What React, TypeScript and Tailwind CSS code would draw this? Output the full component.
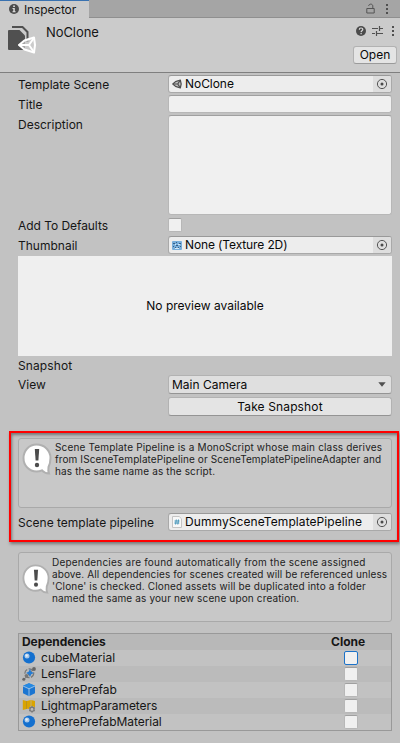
import React from 'react';

const Target = () => (
  <span className="flex h-full w-[18px] shrink-0 items-center justify-center bg-[#dedede]">
    <svg width="12" height="12" viewBox="0 0 12 12" fill="none">
      <circle cx="6" cy="6" r="4.6" stroke="#555" strokeWidth="1" />
      <circle cx="6" cy="6" r="1.5" fill="#4a4a4a" />
    </svg>
  </span>
);

const SceneGlyph = () => (
  <svg width="10" height="10" viewBox="0 0 10 10" fill="none" stroke="#4e4e4e" strokeWidth="1.200" strokeLinejoin="round">
    <path d="M.8 5 3.500 2.600 8.300 1 9.200 5 8.300 9 3.500 7.400Z" fill="#bdbdbd" />
    <path d="M1 5H5.800L8 1.400M5.800 5 8 8.600" />
  </svg>
);

const TextureGlyph = () => (
  <svg width="10" height="9" viewBox="0 0 10 9">
    <rect width="10" height="9" rx="1" fill="#78aedb" />
    <path d="M1 2h2v1H1zM4 1h1v1H4zM7 2h2v1H7zM1 5h1v1H1zM4 4h2v1H4zM8 5h1v1H8zM3 6h1v1H3zM6 6h1v1H6z" fill="#365f86" />
    <path d="M3 3h1v1H3zM6 3h2v1H6zM3 7h4v1H3z" fill="#d5e8f7" />
  </svg>
);

const ScriptGlyph = () => (
  <svg width="10" height="12" viewBox="0 0 10 12">
    <path d="M.5.5h6.700L9.500 2.800v8.700h-9z" fill="#f8f8f8" stroke="#c4c4c4" />
    <path d="M4.300 3.500 3.600 8.500M6.500 3.500 5.800 8.500M2.500 5h5M2.300 7h5" stroke="#3a8fb5" strokeWidth=".9" />
  </svg>
);

const ObjectField = ({ icon, children }: { icon: React.ReactNode; children: React.ReactNode }) => (
  <div className="flex h-[18px] w-[224px] shrink-0 items-center overflow-hidden rounded-[3px] border border-[#a9a9a9] border-t-[#999] bg-[#ededed]">
    <span className="flex w-[16px] shrink-0 items-center pl-[3px]">{icon}</span>
    <span className="flex-1 whitespace-nowrap text-[#090909]">{children}</span>
    <Target />
  </div>
);

const Row = ({ label, className, children }: { label: React.ReactNode; className: string; children?: React.ReactNode }) => (
  <div className={`flex pl-[18px] ${className}`}>
    <div className="h-[18px] w-[150px] shrink-0 whitespace-nowrap leading-[20px]">{label}</div>
    {children}
  </div>
);

const Bubble = ({ width, height }: { width: number; height: number }) => (
  <svg width={width} height={height} viewBox="0 0 30 32" preserveAspectRatio="none" className="shrink-0">
    <path d="M14.500 1.500C7 1.500 1.500 7.500 1.500 15S7 28.500 14.500 28.500c2 0 3.800-.4 5.500-1.200 1.600 1.800 4 3 7 3.200-.8-2-.9-4-.5-6.500C28 21 28.500 18 28.500 15 28.500 7.500 22.500 1.500 14.500 1.500Z" fill="#fff" stroke="#b0b0b0" strokeWidth="2" />
    <path d="M12.800 6h4.400l-.8 11.500h-2.800z" fill="#4c4c4c" />
    <circle cx="15" cy="22" r="2.200" fill="#4c4c4c" />
  </svg>
);

const Dots = () => (
  <svg width="4" height="12" viewBox="0 0 4 12" fill="#4f4f4f">
    <path d="M1 1h2v2H1zM1 5h2v2H1zM1 9h2v2H1z" />
  </svg>
);

const Material = () => (
  <svg width="14" height="14" viewBox="0 0 14 14">
    <circle cx="7" cy="6.500" r="6.100" fill="#1470cf" />
    <circle cx="5" cy="5" r="2.500" fill="#a9c8e8" />
    <circle cx="4.600" cy="4.500" r="1.200" fill="#e4eef8" />
  </svg>
);

const Flare = () => (
  <svg width="14" height="14" viewBox="0 0 14 14">
    <circle cx="7.300" cy="6.300" r="4.400" fill="none" stroke="#777" strokeWidth="1.200" strokeDasharray="5 1.500" />
    <path d="M2 12.500 12 1.500" stroke="#777" strokeWidth="1" />
    <path d="m8 2 1.200 2.800L12 6 9.200 7.200 8 10 6.500 7.200 4 6l2.600-1.200z" fill="#247bd2" />
    <circle cx="12" cy="2" r="1.900" fill="#666" />
    <circle cx="1.800" cy="12.200" r="1.500" fill="#666" />
    <circle cx="4.500" cy="8.800" r="1.900" fill="#777" />
  </svg>
);

const Cube = () => (
  <svg width="14" height="14" viewBox="0 0 14 14">
    <path d="M7 .2 13 2.700v7.600L7 13.300 1 10.300V2.700z" fill="#1b75d1" />
    <path d="M7 .2 13 2.700 7 5.400 1 2.700z" fill="#2589e2" />
    <path d="M1 3 7 5.800 13 3M7 5.800v7.500" fill="none" stroke="#a9c8e5" strokeWidth=".9" />
  </svg>
);

const Lightmap = () => (
  <svg width="14" height="14" viewBox="0 0 14 14">
    <path d="M.8 1 4.500 2v8L.8 11zM5 2l3.700-1v9L5 9.800zM9.300 1 13 2v6H9.300z" fill="#d9a400" />
    <path d="M4.200 2h.8v8h-.8z" fill="#b98b05" />
    <circle cx="10" cy="10.300" r="3.100" fill="#bbb" />
    <circle cx="10" cy="10.300" r="2.100" fill="none" stroke="#777" strokeWidth="1.200" />
    <path d="M10 6.900v1.300M10 12.400v1.400M7 8.600l1.200.7M11.800 11.300l1.200.7M7 12l1.200-.7M11.800 9.300l1.200-.7" stroke="#777" />
  </svg>
);

const dependencies = [
  { name: 'cubeMaterial', icon: <Material />, track: 'tracking-[0.02px]' },
  { name: 'LensFlare', icon: <Flare />, track: 'tracking-[-0.02px]' },
  { name: 'spherePrefab', icon: <Cube />, track: 'tracking-[-0.05px]' },
  { name: 'LightmapParameters', icon: <Lightmap />, track: 'tracking-[-0.07px]' },
  { name: 'spherePrefabMaterial', icon: <Material />, track: 'tracking-[-0.07px]' },
];

export default function App() {
  return (
    <div className="flex h-[743px] w-[400px] flex-col overflow-hidden bg-[#c2c2c2] font-['Inter','Liberation_Sans',sans-serif] text-[12px] leading-[18px] tracking-[0px] text-[#161616]">
      <div className="flex h-[18px] shrink-0 bg-[#a5a5a5]">
        <div className="flex w-[89px] items-center border-t border-[#3a72b0] bg-[#cbcbcb] pl-[9px]">
          <svg width="10" height="10" viewBox="0 0 10 10" className="-mt-px mr-[5px]">
            <circle cx="5" cy="5" r="5" fill="#4b4b4b" />
            <path d="M4.200 1.500h1.700v1.400H4.200zM3.500 4h2.300v3.200h.8v1H3.500v-1h.8V5h-.8z" fill="#ddd" />
          </svg>
          <span className="tracking-[-0.15px]">Inspector</span>
        </div>
        <div className="flex flex-1 items-center justify-end border-b border-[#8f8f8f] pr-[11px]">
          <svg width="9" height="11" viewBox="0 0 9 11" className="mr-[10px]" fill="none" stroke="#555">
            <path d="M.8 5.500h7.400v4.500H.8zM6.800 5.500V3C6.800.5 2.700.5 2.700 3" />
          </svg>
          <Dots />
        </div>
      </div>

      <div className="flex h-[55px] shrink-0 justify-between border-b border-[#7f7f7f] bg-[#cbcbcb]">
        <div className="flex pl-[7px] pt-[7px]">
          <svg width="30" height="30" viewBox="0 0 30 30">
            <path d="M5 2h10.500l5 5v10" fill="none" stroke="#505050" strokeWidth="2" />
            <path d="M1 6q0-1 1-1h10.500l5.500 5.500V25H2q-1 0-1-1z" fill="#505050" />
            <path d="m11 20 5.500-5 10.500-4 2 9-2 8.500L16.500 25z" fill="#cbcbcb" opacity=".7" />
            <g fill="none" stroke="#fff" strokeWidth="2" strokeLinejoin="round">
              <path d="m12 20 5.500-4.500 9.500-3 1 7.500-1 7.500-9.500-3z" />
              <path d="M13 20h9l4.500-6.500M22 20l4.500 6.500" />
            </g>
          </svg>
          <span className="ml-[9px] -mt-[2px] text-[13px] tracking-[-0.08px]">NoClone</span>
        </div>
        <div className="flex flex-col items-end pr-[3px] pt-[7px]">
          <div className="mr-[2px] flex h-[12px] items-center gap-[6px]">
            <svg width="10" height="10" viewBox="0 0 10 10">
              <circle cx="5" cy="5" r="5" fill="#4b4b4b" />
              <path d="M3.300 3.800c0-2.400 3.500-2.300 3.500-.2 0 1.200-1.600 1.200-1.700 2.500M5.100 7v1.200" fill="none" stroke="#ddd" strokeWidth="1.200" />
            </svg>
            <svg width="11" height="10" viewBox="0 0 11 10" fill="none" stroke="#505050">
              <path d="M0 2.500h6M8 2.500h3M7.500 0v5M0 7.500h3M5 7.500h6M4.500 5v5" strokeWidth="1.200" />
            </svg>
            <span className="flex pl-[2px]"><Dots /></span>
          </div>
          <button className="mt-[9px] h-[18px] w-[44px] rounded-[3px] border border-[#b2b2b2] border-b-[#9a9a9a] bg-[#e4e4e4] leading-[16px] text-[#090909]">Open</button>
        </div>
      </div>

      <Row label="Template Scene" className="mt-[2px]">
        <ObjectField icon={<SceneGlyph />}><span className="tracking-[-0.05px]">NoClone</span></ObjectField>
      </Row>
      <Row label="Title" className="mt-[2px]">
        <div className="h-[18px] w-[224px] rounded-[3px] border border-[#b7b7b7] border-t-[#a0a0a0] bg-[#f0f0f0]" />
      </Row>
      <Row label="Description" className="mt-[2px]">
        <div className="h-[100px] w-[224px] rounded-[3px] border border-[#b7b7b7] border-t-[#a0a0a0] bg-[#f0f0f0]" />
      </Row>
      <Row label={<span className="tracking-[-0.05px]">Add To Defaults</span>} className="mt-px h-[20px]">
        <div className="mt-[2px] h-[14px] w-[14px] rounded-[2px] border border-[#b7b7b7] border-t-[#a0a0a0] bg-[#f0f0f0]" />
      </Row>
      <Row label="Thumbnail" className="">
        <ObjectField icon={<TextureGlyph />}><span className="tracking-[-0.12px]">None (Texture 2D)</span></ObjectField>
      </Row>
      <div className="ml-[18px] mt-[2px] flex h-[100px] w-[374px] shrink-0 items-center justify-center bg-[#efefef] text-[#090909]">No preview available</div>
      <Row label={<span className="tracking-[0.1px]">Snapshot</span>} className="mt-0 h-[19px]" />
      <Row label="View" className="">
        <div className="flex h-[19px] w-[224px] items-center justify-between rounded-[3px] border border-[#b2b2b2] border-b-[#949494] bg-[#dfdfdf] pl-[3px] pr-[5px] text-[#090909]">
          Main Camera
          <svg width="8" height="5" viewBox="0 0 8 5"><path d="M.3.3h7.400L4 4.700z" fill="#505050" /></svg>
        </div>
      </Row>
      <button className="ml-[168px] mt-[3px] h-[19px] w-[224px] shrink-0 rounded-[3px] border border-[#b2b2b2] border-b-[#949494] bg-[#e4e4e4] leading-[17px] tracking-[0.13px] text-[#090909]">Take Snapshot</button>

      <div className="ml-[9px] mt-[15px] h-[111px] w-[390px] shrink-0 border-2 border-[#f00] pl-[7px] pt-[5px] shadow-[1px_2px_3px_#777,inset_1px_2px_3px_#777]">
        <div className="flex h-[70px] w-[374px] rounded-[3px] border border-[#a9a9a9] bg-[#c8c8c8] pl-[3px] pt-[4px]">
          <Bubble width={30} height={32} />
          <p className="ml-[3px] -mt-[2px] whitespace-nowrap text-[10px] leading-[12px] text-[#222]">
            <span className="block tracking-[0.16px]">Scene Template Pipeline is a MonoScript whose main class derives</span>
            <span className="block tracking-[0.1px]">from ISceneTemplatePipeline or SceneTemplatePipelineAdapter and</span>
            <span className="block tracking-[0.14px]">has the same name as the script.</span>
          </p>
        </div>
        <div className="mt-[5px] flex">
          <div className="w-[150px] whitespace-nowrap leading-[20px]">Scene template pipeline</div>
          <ObjectField icon={<ScriptGlyph />}><span className="tracking-[0.08px]">DummySceneTemplatePipeline</span></ObjectField>
        </div>
      </div>

      <div className="ml-[18px] mt-[10px] flex h-[70px] w-[374px] shrink-0 rounded-[3px] border border-[#a9a9a9] bg-[#c8c8c8] pl-[3px] pt-[3px]">
        <span className="mt-[8px]"><Bubble width={28} height={30} /></span>
        <p className="ml-[2px] whitespace-nowrap text-[10px] leading-[12px] text-[#222]">
          <span className="block tracking-[0.21px]">Dependencies are found automatically from the scene assigned</span>
          <span className="block tracking-[0.1px]">above. All dependencies for scenes created will be referenced unless</span>
          <span className="block tracking-[0.15px]">'Clone' is checked. Cloned assets will be duplicated into a folder</span>
          <span className="block tracking-[0.14px]">named the same as your new scene upon creation.</span>
        </p>
      </div>

      <div className="ml-[18px] mt-[11px] h-[98px] w-[374px] shrink-0 border border-[#999]">
        <div className="flex h-[16px] bg-[#b8b8b8] pl-[3px] font-bold leading-[15px]">
          <span className="w-[309px] tracking-[-0.05px]">Dependencies</span>
          <span>Clone</span>
        </div>
        {dependencies.map((d, i) => (
          <div key={d.name} className={`flex h-[16px] items-center pl-[3px] ${i % 2 ? 'bg-[#bbbbbb]' : 'bg-[#c2c2c2]'}`}>
            {d.icon}
            <span className={`ml-[5px] w-[303px] whitespace-nowrap leading-[16px] ${d.track}`}>{d.name}</span>
            <span className={`h-[14px] w-[14px] rounded-[2px] border bg-[#f0f0f0] ${i === 0 ? 'border-[#1c72c8]' : 'border-[#b7b7b7] border-t-[#a0a0a0]'}`} />
          </div>
        ))}
      </div>
    </div>
  );
}
